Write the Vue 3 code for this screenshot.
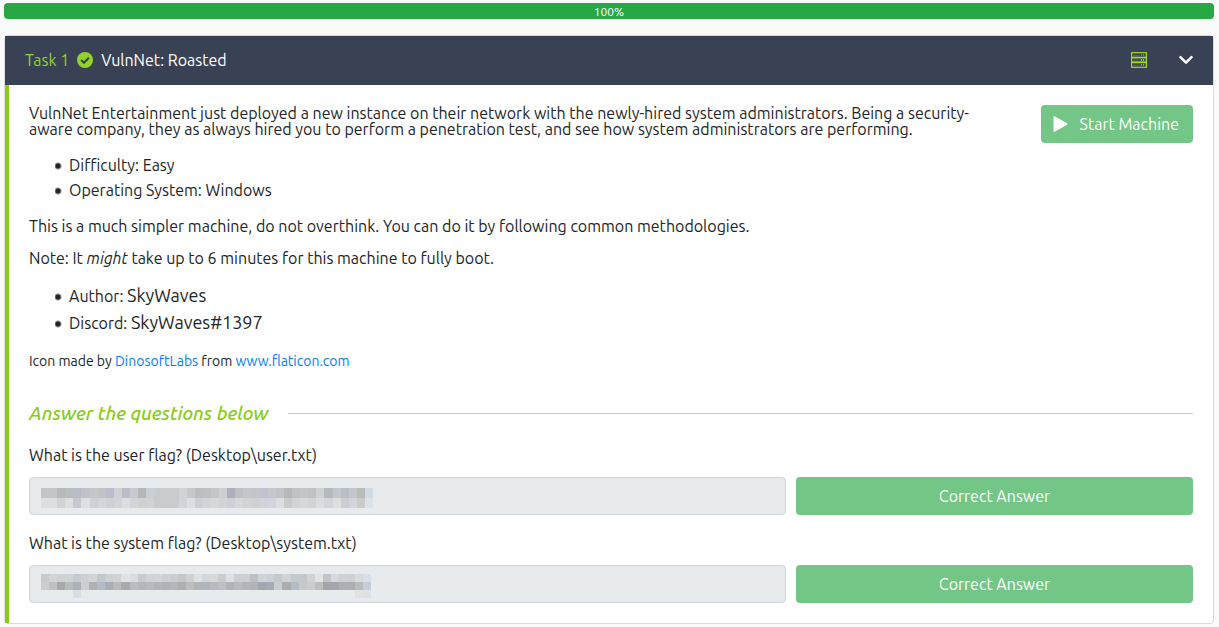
<script setup>
import { ref } from 'vue'

const open = ref(true)

const questions = [
  {
    id: 'user-flag',
    text: 'What is the user flag? (Desktop\\user.txt)',
    cols: 41,
    tall: true,
    rows: [
      'c2c6c9 c2c6c9 b8b8b9 b8bdbf b5bcc6 c0c2c9 c4c7ca c1c4c6 bbbec8 cfd1d4 babdc7 c7c9ce b5b6b7 c8cfd6 c9cbcd c9cbcd c9cbcd cfd2d6 c6c9cb bbbdc3 c0bfc2 c3c6ca cbcfd1 adb0b9 c0c0c2 c3c7cb c3c5cb bfc3cd c4c7cc c0c4c7 b7b7ba c0c1c4 c3c6c9 bfc3c6 ced2d4 b5babd c3c6ca babec8 c3c7cc babcba d2dae2',
      'dcdfe2 dcdfe2 d1d2d6 dbdfe1 c7c9ce dcdfe4 cfd2d4 d3d6d8 cdd0d4 d3d4d9 dadde1 d2d5d7 cdd1d3 d0d3d5 c9cbcf c9cbcf c9cbcd d2d4d9 dcdfe2 cdcfd4 d2d4d7 d5d8da d1d3d7 cdd0d5 d5d7d9 d1d4d6 cfd2d5 d0d3d7 d2d5df dcdfe1 c8cacd d1d3d6 d6d9db d1d3d7 dadde1 d2d6da dddee0 cacdd2 d3d5d9 c9cacc dbe2ea'
    ]
  },
  {
    id: 'system-flag',
    text: 'What is the system flag? (Desktop\\system.txt)',
    cols: 41,
    tall: false,
    rows: [
      'c9cacd d2d5d8 d2d1d1 d0d3d6 c6cad2 cdd0d2 d2d5d8 c4c8ca cdd0d2 d0d3d4 dee2e5 dadde0 c9ccce d0d3d5 d2d5d7 cdd0d3 caccd0 c5c7ca d0d1d5 dde1e4 d4d6d9 d6d8da caccd0 dde1e5 cdd0d2 cdd0d2 bdc0c2 d0d3d8 cdd1d5 c6c8cc d0d3d5 c6c9cb c4c6ca d0d3d6 e0e4e5 c2c5ca d5d8dc ced2d4 cdd1d3 d9dadb d7dfe8',
      'caccce bdc1c3 a8a9ad b5bcbe adb0b8 cbcdd1 b0b1b1 b3bcc5 abadb2 b9bcbc a7aaae b8bbbf b3b6ba b7babf b2b5b8 aeb3b9 b2b5bb adafb3 bdbdbf b1b5b9 adb5bd b8bac0 bcbfc6 b1b3b8 b7babe b3b5ba b0b3b7 a4a7ae a4abb4 cacdd0 acadab b4bcc7 c7cacc caccd0 bebfc1 a2a5aa a4a7ac adb0b3 adb0b2 b9bdc2 c8ccd6',
      '- - - - dbdee1 e5e9ec - - - - - - - - - - - - - - - - - - - - - - - - - - - - - - - - - e1e3e5 dee2e6'
    ]
  }
].map((q) => ({
  ...q,
  cells: q.rows.flatMap((row, y) =>
    row.split(' ').map((c, x) => ({ x, y, c })).filter((cell) => cell.c !== '-')
  )
}))
</script>

<template>
  <main class="page">
    <div class="progress" role="progressbar" aria-valuenow="100" aria-valuemin="0" aria-valuemax="100">
      100%
    </div>

    <section class="card">
      <header class="card-header">
        <span class="task">Task 1</span>
        <svg class="check" viewBox="0 0 16 16" aria-hidden="true">
          <circle cx="8" cy="8" r="8" fill="#93d12b" />
          <path d="M4.2 8.1 7 10.8 11.9 5.7" fill="none" stroke="#384254" stroke-width="2.1" />
        </svg>
        <h1 class="title">VulnNet: Roasted</h1>
        <svg class="server" viewBox="0 0 16 16" aria-hidden="true" fill="none" stroke="#a4dc1c">
          <rect x="0.6" y="0.7" width="14.8" height="4.6" stroke-width="1.2" />
          <rect x="0.6" y="5.8" width="14.8" height="4.2" stroke-width="1.2" />
          <rect x="0.6" y="10.6" width="14.8" height="4.7" stroke-width="1.2" />
          <path d="M2 3.5h7M2 8h7M2 13.2h7" stroke-width=".5" opacity=".5" />
          <path d="M10 3h1.2M12 3h1.2M10 12.8h1.2M12 12.8h1.2" stroke-width="1.2" />
          <path d="M10.5 7v2M12.6 7v2" stroke-width="1" />
        </svg>
        <button class="toggle" type="button" aria-label="Toggle task" :aria-expanded="open" @click="open = !open">
          <svg viewBox="0 0 14 14" aria-hidden="true">
            <path d="M1.5 4.2 7 9.6l5.5-5.4" fill="none" stroke="#fff" stroke-width="2.5" stroke-linecap="round" stroke-linejoin="round" />
          </svg>
        </button>
      </header>

      <div v-if="open" class="card-body">
        <div class="intro">
          <div class="description">
            <p>
              VulnNet Entertainment just deployed a new instance on their network with the
              newly-hired system administrators. Being a security-aware company, they as always
              hired you to perform a penetration test, and see how system administrators are
              performing.
            </p>
            <ul>
              <li>Difficulty: Easy</li>
              <li>Operating System: Windows</li>
            </ul>
            <p>This is a much simpler machine, do not overthink. You can do it by following common methodologies.</p>
            <p>Note: It <em>might</em> take up to 6 minutes for this machine to fully boot.</p>
            <ul class="credits">
              <li>Author: <span>SkyWaves</span></li>
              <li>Discord: <span>SkyWaves#1397</span></li>
            </ul>
            <p class="small">
              Icon made by <a href="#dinosoftlabs">DinosoftLabs</a> from
              <a href="#flaticon">www.flaticon.com</a>
            </p>
          </div>
          <button class="btn start" type="button">
            <svg viewBox="0 0 14 16" aria-hidden="true">
              <path d="M0 1.3Q0-.5 1.6.4L13.2 7q1.5 1 0 2L1.6 15.6Q0 16.5 0 14.7Z" fill="#fff" />
            </svg>
            Start Machine
          </button>
        </div>

        <h2 class="divider">Answer the questions below</h2>

        <form v-for="q in questions" :key="q.id" class="question" @submit.prevent>
          <label :for="q.id">{{ q.text }}</label>
          <div class="answer">
            <div class="field">
              <input :id="q.id" type="text" disabled />
              <svg
                class="mosaic"
                :class="{ tall: q.tall }"
                :viewBox="`0 0 ${q.cols} ${q.rows.length}`"
                preserveAspectRatio="none"
                shape-rendering="crispEdges"
                aria-hidden="true"
              >
                <rect
                  v-for="cell in q.cells"
                  :key="`${cell.x}-${cell.y}`"
                  :x="cell.x"
                  :y="cell.y"
                  width="1"
                  height="1"
                  :fill="`#${cell.c}`"
                />
              </svg>
            </div>
            <button class="btn" type="submit">Correct Answer</button>
          </div>
        </form>
      </div>
    </section>
  </main>
</template>

<style>
body {
  margin: 0;
  background: #fafafa;
}
</style>

<style scoped>
.page {
  padding: 3px 5px 3px 4px;
  font: 16px/16px Ubuntu, "Noto Sans", sans-serif;
  color: #212529;
}
.page *,
.page {
  box-sizing: border-box;
}
.progress {
  height: 16px;
  border-radius: 4px;
  background: #28a745;
  color: #fff;
  font-size: 12px;
  line-height: 18px;
  text-align: center;
}
.card {
  margin-top: 16px;
  border: 1px solid #dcdcdd;
  border-radius: 4px;
  background: #fff;
}
.card-header {
  display: flex;
  align-items: center;
  height: 49px;
  padding: 0 20px 1px;
  background: #384254;
  color: #fff;
}
.task {
  color: #93d12b;
}
.check {
  width: 16px;
  height: 16px;
  margin: 0 8px;
}
.title {
  margin: 0;
  font-size: 16px;
  font-weight: 400;
}
.server {
  width: 16px;
  height: 16px;
  margin-left: auto;
  margin-right: 32px;
}
.toggle {
  display: flex;
  padding: 0;
  border: 0;
  background: none;
  cursor: pointer;
}
.toggle svg {
  width: 14px;
  height: 14px;
}
.card-body {
  padding: 20px;
  border-left: 4px solid #88cc14;
}
.intro {
  display: flex;
  align-items: flex-start;
  justify-content: space-between;
  gap: 48px;
}
p {
  margin: 0 0 16px;
}
ul {
  margin: 0 0 15px;
  padding-left: 26px;
  list-style: none;
  line-height: 25px;
}
li {
  padding-left: 14px;
  background: radial-gradient(circle at 3px 13px, #212529 2px, transparent 4px);
}
.credits {
  margin: 17px 0 16px;
  line-height: 27px;
}
.credits li {
  background: radial-gradient(circle at 3px 14px, #212529 2px, transparent 4px);
}
.credits span {
  font-size: 18px;
  line-height: 16px;
}
.small {
  margin: 0;
  font-size: 14px;
}
a {
  color: #007bff;
  text-decoration: none;
}
.btn {
  height: 38px;
  padding: 0 12px;
  border: 0;
  border-radius: 4px;
  background: #73c686;
  color: #fff;
  font: inherit;
  white-space: nowrap;
  cursor: pointer;
}
.start {
  display: flex;
  flex: none;
  align-items: center;
  gap: 12px;
  padding-right: 14px;
}
.start svg {
  width: 15px;
  height: 16px;
}
.divider {
  display: flex;
  align-items: center;
  gap: 20px;
  margin: 32px 0 18px;
  color: #88cc14;
  font-size: 19px;
  font-style: italic;
  font-weight: 500;
  line-height: 24px;
}
.divider::after {
  content: "";
  flex: 1;
  height: 1px;
  background: #c8c8c8;
}
.question {
  margin-bottom: 16px;
}
.question:last-child {
  margin-bottom: 0;
}
label {
  display: block;
  margin-bottom: 10px;
  line-height: 24px;
}
.answer {
  display: grid;
  grid-template-columns: 757fr 397fr;
  gap: 10px;
}
.field {
  position: relative;
}
input {
  display: block;
  width: 100%;
  height: 38px;
  padding: 6px 12px;
  border: 1px solid #ced4da;
  border-radius: 4px;
  background: #e7ebee;
  font: inherit;
}
.mosaic {
  position: absolute;
  left: 12px;
  top: 9px;
  width: 330px;
  height: 24px;
}
.mosaic.tall {
  top: 11px;
  width: 332px;
  height: 20px;
}
</style>
